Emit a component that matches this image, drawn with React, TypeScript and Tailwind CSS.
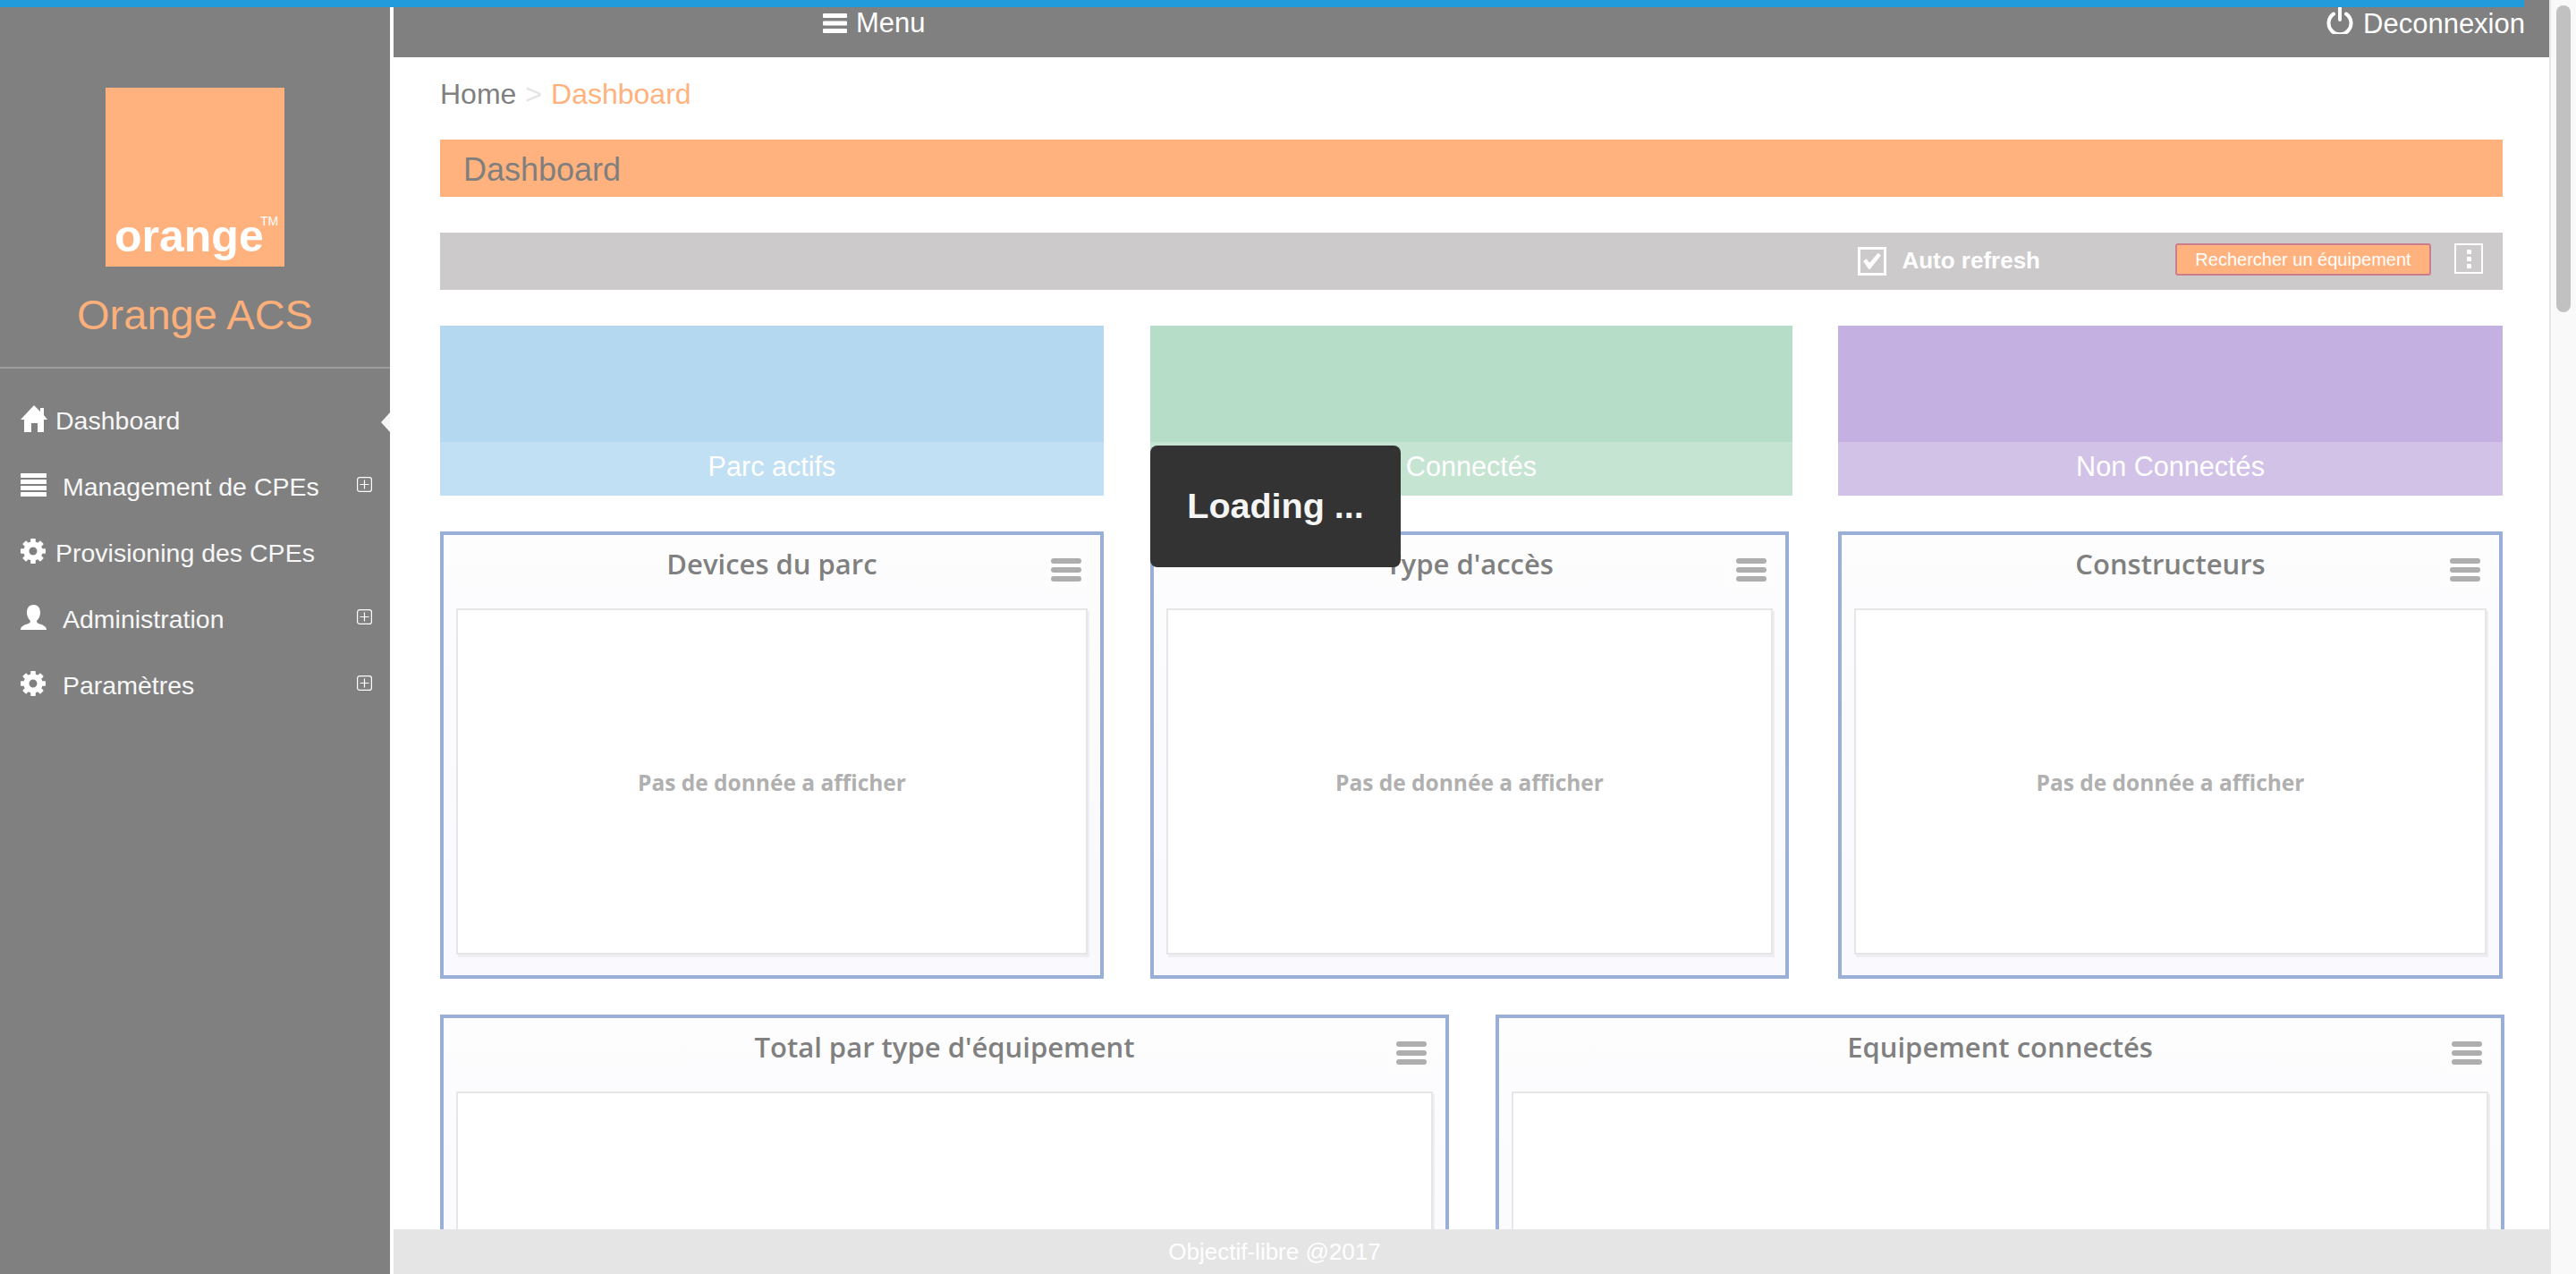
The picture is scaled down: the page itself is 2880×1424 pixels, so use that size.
const STATS = [
  { label: "Parc actifs", top: "bg-[#b4d8f0]", bottom: "bg-[#c2e0f4]", box: "w-[742px]" },
  { label: "Connectés", top: "bg-[#b5ddc7]", bottom: "bg-[#c6e4d2]", box: "ml-[52px] w-[718px]" },
  { label: "Non Connectés", top: "bg-[#c4b0e1]", bottom: "bg-[#d2c2e7]", box: "ml-[51px] w-[743px]" },
];

const TEETH = [0, 45, 90, 135, 180, 225, 270, 315];

function HomeIcon() {
  return (
    <svg viewBox="0 0 30 30" className="h-[30px] w-[30px] fill-white">
      <path d="M15 0 L22 7 V3 H26 V11 L30 16 H26 V30 H19 V20 H12 V30 H4 V16 H0 Z" />
    </svg>
  );
}

function ListIcon() {
  return (
    <svg viewBox="0 0 29 26" className="h-[26px] w-[29px] fill-white">
      <rect x="0" y="0" width="29" height="5" rx="0.5" />
      <rect x="0" y="7" width="29" height="5" rx="0.5" />
      <rect x="0" y="14" width="29" height="5" rx="0.5" />
      <rect x="0" y="21" width="29" height="5" rx="0.5" />
    </svg>
  );
}

function GearIcon() {
  return (
    <svg viewBox="0 0 28 28" className="h-[28px] w-[28px] fill-white">
      <circle cx="14" cy="14" r="7.6" fill="none" stroke="white" strokeWidth="6.2" />
      {TEETH.map((a) => (
        <rect key={a} x="11.2" y="0" width="5.6" height="6" rx="0.8" transform={`rotate(${a} 14 14)`} />
      ))}
    </svg>
  );
}

function UserIcon() {
  return (
    <svg viewBox="0 0 29 28" className="h-[28px] w-[29px] fill-white">
      <path d="M14.5 0 C9 0 7 4 7 9 C7 13 9 16 11 18 C11 19 10.5 20 9 21 C5 22 0 24 0 28 H29 C29 24 24 22 20 21 C18.5 20 18 19 18 18 C20 16 22 13 22 9 C22 4 20 0 14.5 0 Z" />
    </svg>
  );
}

function PlusBox() {
  return (
    <svg viewBox="0 0 17 17" className="h-[17px] w-[17px] fill-none stroke-white" strokeWidth="1.2">
      <rect x="0.6" y="0.6" width="15.8" height="15.8" rx="2.5" />
      <path d="M8.5 3.5 V13.5 M3.5 8.5 H13.5" />
    </svg>
  );
}

const NAV = [
  { label: "Dashboard", icon: <HomeIcon />, gap: "gap-[9px]", plus: false, active: true },
  { label: "Management de CPEs", icon: <ListIcon />, gap: "gap-[17px]", plus: true, active: false },
  { label: "Provisioning des CPEs", icon: <GearIcon />, gap: "gap-[9px]", plus: false, active: false },
  { label: "Administration", icon: <UserIcon />, gap: "gap-[17px]", plus: true, active: false },
  { label: "Paramètres", icon: <GearIcon />, gap: "gap-[17px]", plus: true, active: false },
];

function Sidebar() {
  return (
    <aside className="flex h-full w-[436px] shrink-0 flex-col bg-[#808080] pt-[98px]">
      <div className="relative mx-auto flex h-[200px] w-[200px] items-end bg-[#ffb27d] pb-[9px] pl-[10px] text-white">
        <span className="text-[50px] font-bold leading-[50px]">orange</span>
        <span className="absolute left-[173px] top-[141px] text-[14px] leading-[16px]">TM</span>
      </div>
      <h1 className="mt-[31px] text-center text-[47px] font-normal leading-[46px] text-[#fbaf7a]">Orange ACS</h1>
      <div className="mt-[35px] h-[2px] bg-[#9e9e9e]" />
      <nav className="pt-[21px]">
        {NAV.map((item) => (
          <div key={item.label} className={`relative flex h-[74px] items-center pl-[23px] text-[28.5px] text-[#f7f7f7] ${item.gap}`}>
            <span className="mb-[5px] flex w-[30px] justify-start text-white">{item.icon}</span>
            <span>{item.label}</span>
            {item.plus && (
              <span className="mb-[5px] ml-auto mr-[20px] flex">
                <PlusBox />
              </span>
            )}
            {item.active && (
              <span className="absolute right-0 top-[28px] h-0 w-0 border-y-[11px] border-r-[10px] border-y-transparent border-r-[#f5f5f5]" />
            )}
          </div>
        ))}
      </nav>
    </aside>
  );
}

function Header() {
  return (
    <header className="ml-[4px] flex h-[64px] shrink-0 items-start justify-between bg-[#808080] pl-[480px] pr-[27px] pt-[8px] text-[31px] leading-[36px] text-white">
      <div className="flex items-center gap-[10px]">
        <svg viewBox="0 0 27 22" className="h-[22px] w-[27px] fill-white">
          <rect width="27" height="5" y="0" rx="1" />
          <rect width="27" height="5" y="8.5" rx="1" />
          <rect width="27" height="5" y="17" rx="1" />
        </svg>
        <span>Menu</span>
      </div>
      <div className="flex items-center gap-[11px]">
        <svg viewBox="0 0 30 30" className="mb-[8px] h-[30px] w-[30px] fill-none stroke-white" strokeWidth="4" strokeLinecap="round">
          <path d="M8 7.5 A12.5 12.5 0 1 0 22 7.5" />
          <path d="M15 1 V14" />
        </svg>
        <span>Deconnexion</span>
      </div>
    </header>
  );
}

function Toolbar() {
  return (
    <div className="mt-[40px] flex h-[64px] items-center justify-end bg-[#cccacb] pr-[22px] text-white">
      <span className="flex h-[32px] w-[32px] items-center justify-center border-[3px] border-white">
        <svg viewBox="0 0 20 18" className="h-[20px] w-[22px] fill-white">
          <path d="M1 9 L4 6.5 L7.5 10.5 L16 0.5 L19 3 L8 17 L6.5 17 Z" />
        </svg>
      </span>
      <span className="mb-[3px] ml-[17px] text-[26px] font-bold leading-[32px]">Auto refresh</span>
      <button className="mb-[4px] ml-[151px] flex h-[36px] w-[286px] items-center justify-center rounded-[3px] border-2 border-[#cc7d8b] bg-[#ffb27d] text-[20px] text-white">
        Rechercher un équipement
      </button>
      <span className="mb-[6px] ml-[26px] flex h-[34px] w-[32px] flex-col items-center justify-center gap-[3px] border-2 border-white">
        <span className="h-[5px] w-[5px] rounded-[1px] bg-white" />
        <span className="h-[5px] w-[5px] rounded-[1px] bg-white" />
        <span className="h-[5px] w-[5px] rounded-[1px] bg-white" />
      </span>
    </div>
  );
}

function StatCard({ label, top, bottom, box }: { label: string; top: string; bottom: string; box: string }) {
  return (
    <div className={`flex h-[190px] flex-col ${box}`}>
      <div className={`h-[130px] ${top}`} />
      <div className={`flex h-[60px] items-center justify-center pb-[4px] text-[30.6px] text-white ${bottom}`}>{label}</div>
    </div>
  );
}

function ChartCard({ title, message, box }: { title: string; message?: string; box: string }) {
  return (
    <div className={`relative h-[500px] border-4 border-[#9aafd6] bg-gradient-to-b from-[#fdfdfe] to-[#f9f9fe] ${box}`}>
      <div className="flex h-[64px] items-center justify-center text-[31px] font-semibold text-[#808080] [font-family:'Open_Sans',sans-serif]">
        {title}
      </div>
      <button className="absolute right-[15px] top-[17px] flex h-[44px] w-[48px] flex-col justify-center gap-[4px] rounded-[4px] bg-[#fdfdfe] pl-[8px] pr-[6px]">
        <span className="h-[6px] rounded-[3px] bg-[#aeaeae]" />
        <span className="h-[6px] rounded-[3px] bg-[#aeaeae]" />
        <span className="h-[6px] rounded-[3px] bg-[#aeaeae]" />
      </button>
      <div className="mx-[14px] mt-[18px] flex h-[387px] items-center justify-center border-2 border-[#e6e6e6] bg-white pt-[3px] text-[24.5px] font-bold text-[#b0b0b0] shadow-[2px_3px_0_#eeeef2] [font-family:'Open_Sans',sans-serif]">
        {message}
      </div>
    </div>
  );
}

export default function App() {
  const empty = "Pas de donnée a afficher";
  return (
    <div className="relative flex h-[1424px] w-[2880px] overflow-hidden bg-white [font-family:'Liberation_Sans',Arial,sans-serif]">
      <Sidebar />

      <main className="flex h-full w-[2414px] shrink-0 flex-col">
        <Header />
        <div className="min-h-0 flex-1 overflow-hidden pl-[56px]">
          <div className="w-[2306px]">
            <div className="mb-[10px] flex h-[82px] items-center text-[32px]">
              <span className="text-[#808080]">Home</span>
              <span className="mx-[10px] text-[#e5e5e5]">&gt;</span>
              <span className="text-[#ffb27d]">Dashboard</span>
            </div>
            <div className="flex h-[64px] items-center bg-[#ffb27d] pl-[26px] pt-[3px] text-[36px] text-[#7f7f7f]">Dashboard</div>
            <Toolbar />
            <div className="mt-[40px] flex">
              {STATS.map((s) => (
                <StatCard key={s.label} {...s} />
              ))}
            </div>
            <div className="mt-[40px] flex">
              <ChartCard box="w-[742px]" title="Devices du parc" message={empty} />
              <ChartCard box="ml-[52px] w-[714px]" title="Type d'accès" message={empty} />
              <ChartCard box="ml-[55px] w-[743px]" title="Constructeurs" message={empty} />
            </div>
          </div>
          <div className="mt-[40px] grid w-[2308px] grid-cols-2 gap-x-[52px]">
            <ChartCard box="w-full" title="Total par type d'équipement" />
            <ChartCard box="w-full" title="Equipement connectés" />
          </div>
        </div>
        <footer className="ml-[4px] flex h-[50px] shrink-0 items-center justify-center bg-[#e5e5e5] pr-[440px] text-[26px] text-white">Objectif-libre @2017</footer>
      </main>

      {/* page scrollbar */}
      <div className="h-full w-[30px] shrink-0 border-l-2 border-[#e6e6e6] bg-[#f9f9f9] pl-[6px] pt-[6px]">
        <div className="h-[343px] w-[16px] rounded-[8px] bg-[#c1c1c1]" />
      </div>

      {/* loading progress bar */}
      <div className="absolute left-0 top-0 h-[8px] w-[2822px] bg-[#229bdd]" />

      <div className="absolute left-[1286px] top-[498px] flex h-[136px] w-[280px] items-center justify-center rounded-[8px] bg-[#333333] text-[39.5px] font-bold text-[#f5f5f5]">
        Loading ...
      </div>
    </div>
  );
}
